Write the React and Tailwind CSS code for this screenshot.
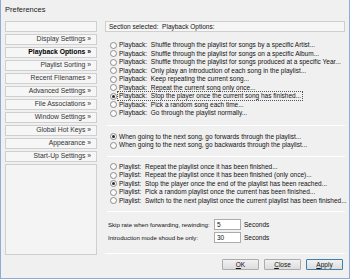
import clsx from 'clsx'

const sections = [
  '',
  'Display Settings »',
  'Playback Options »',
  'Playlist Sorting »',
  'Recent Filenames »',
  'Advanced Settings »',
  'File Associations »',
  'Window Settings »',
  'Global Hot Keys »',
  'Appearance »',
  'Start-Up Settings »',
]

const playback = [
  'Playback:  Shuffle through the playlist for songs by a specific Artist...',
  'Playback:  Shuffle through the playlist for songs on a specific Album...',
  'Playback:  Shuffle through the playlist for songs produced at a specific Year...',
  'Playback:  Only play an introduction of each song in the playlist...',
  'Playback:  Keep repeating the current song...',
  'Playback:  Repeat the current song only once...',
  'Playback:  Stop the player once the current song has finished...',
  'Playback:  Pick a random song each time...',
  'Playback:  Go through the playlist normally...',
]

const direction = [
  'When going to the next song, go forwards through the playlist...',
  'When going to the next song, go backwards through the playlist...',
]

const playlist = [
  'Playlist:  Repeat the playlist once it has been finished...',
  'Playlist:  Repeat the playlist once it has been finished (only once)...',
  'Playlist:  Stop the player once the end of the playlist has been reached...',
  'Playlist:  Pick a random playlist once the current has been finished...',
  'Playlist:  Switch to the next playlist once the current playlist has been finished...',
]

function Radio({ label, checked, focused }) {
  return (
    <div className="flex items-center h-[8.5px]">
      <div className="w-[7px] h-[7px] ml-[5px] rounded-full border border-[#8c8c8c] bg-[#fbfbfb] flex items-center justify-center shrink-0">
        {checked && <div className="w-[3px] h-[3px] rounded-full bg-[#2a2a2a]" />}
      </div>
      <span
        className={clsx(
          'ml-[1px] px-[1px] whitespace-pre leading-[8px]',
          focused ? 'outline outline-1 outline-dotted outline-[#555]' : ''
        )}
      >
        {label}
      </span>
    </div>
  )
}

function Separator({ className }) {
  return <div className={clsx('h-px bg-[#d5d5d5] border-b border-white', className)} />
}

function DlgButton({ children, primary }) {
  return (
    <div
      className={clsx(
        'w-[37px] h-[11px] flex items-center justify-center rounded-[1px] border bg-gradient-to-b from-[#f2f2f2] to-[#dcdcdc]',
        primary ? 'border-[#3c7fb1]' : 'border-[#acacac]'
      )}
    >
      {children}
    </div>
  )
}

export default function App() {
  return (
    <div
      className="w-[350px] h-[279px] bg-[#f0f0f0] border-x border-b border-[#8fa9d8] text-[6.5px] text-[#111] overflow-hidden flex flex-col"
      style={{ fontFamily: '"Liberation Sans", Arial, sans-serif' }}
    >
      {/* Title */}
      <div className="h-[20px] pl-[4px] flex items-center text-[7.5px] text-[#222]">Preferences</div>

      <div className="flex">
        {/* Section list */}
        <div className="ml-[4px] mt-[1px] w-[92px] flex flex-col gap-[2px] text-[6.8px]">
          {sections.map((s, i) => (
            <div
              key={i}
              className={clsx(
                'h-[11px] flex items-center justify-end pr-[5px] border border-[#cfcfcf] bg-[#f6f6f6] whitespace-nowrap',
                i === 2 ? 'font-bold text-black' : 'text-[#333]'
              )}
            >
              {s}
            </div>
          ))}
          <div className="h-[91px] border border-[#cfcfcf] bg-[#f4f4f4]" />
        </div>

        {/* Options */}
        <div className="ml-[8px] w-[240px] flex flex-col">
          <div className="h-[11px] mt-[1px] flex items-center pl-[3px] border border-[#cfcfcf] bg-[#f6f6f6] whitespace-pre">
            Section selected:  Playback Options:
          </div>

          <div className="mt-[9px] flex flex-col">
            {playback.map((t, i) => (
              <Radio key={i} label={t} checked={i === 6} focused={i === 6} />
            ))}
          </div>

          <Separator className="mt-[7px] ml-[2px]" />

          <div className="mt-[7px] flex flex-col">
            {direction.map((t, i) => (
              <Radio key={i} label={t} checked={i === 0} />
            ))}
          </div>

          <Separator className="mt-[6px] ml-[2px]" />

          <div className="mt-[6px] flex flex-col">
            {playlist.map((t, i) => (
              <Radio key={i} label={t} checked={i === 2} />
            ))}
          </div>

          <Separator className="mt-[6px] ml-[2px]" />

          <div className="mt-[7px] flex flex-col gap-[2px] pl-[3px]">
            <div className="flex items-center h-[11px]">
              <span className="w-[106px] whitespace-nowrap text-[6.1px]">Skip rate when forwarding, rewinding:</span>
              <div className="w-[27px] h-[11px] border border-[#acacac] bg-white flex items-center pl-[2px]">5</div>
              <span className="ml-[3px]">Seconds</span>
            </div>
            <div className="flex items-center h-[11px]">
              <span className="w-[106px] whitespace-nowrap text-[6.1px]">Introduction mode shoud be only:</span>
              <div className="w-[27px] h-[11px] border border-[#acacac] bg-white flex items-center pl-[2px]">30</div>
              <span className="ml-[3px]">Seconds</span>
            </div>
          </div>

          <Separator className="mt-[10px]" />

          <div className="mt-[5px] flex justify-end gap-[5px] pr-[2px]">
            <DlgButton>
              <span><span className="underline">O</span>K</span>
            </DlgButton>
            <DlgButton>
              <span><span className="underline">C</span>lose</span>
            </DlgButton>
            <DlgButton primary>
              <span><span className="underline">A</span>pply</span>
            </DlgButton>
          </div>
        </div>
      </div>
    </div>
  )
}
